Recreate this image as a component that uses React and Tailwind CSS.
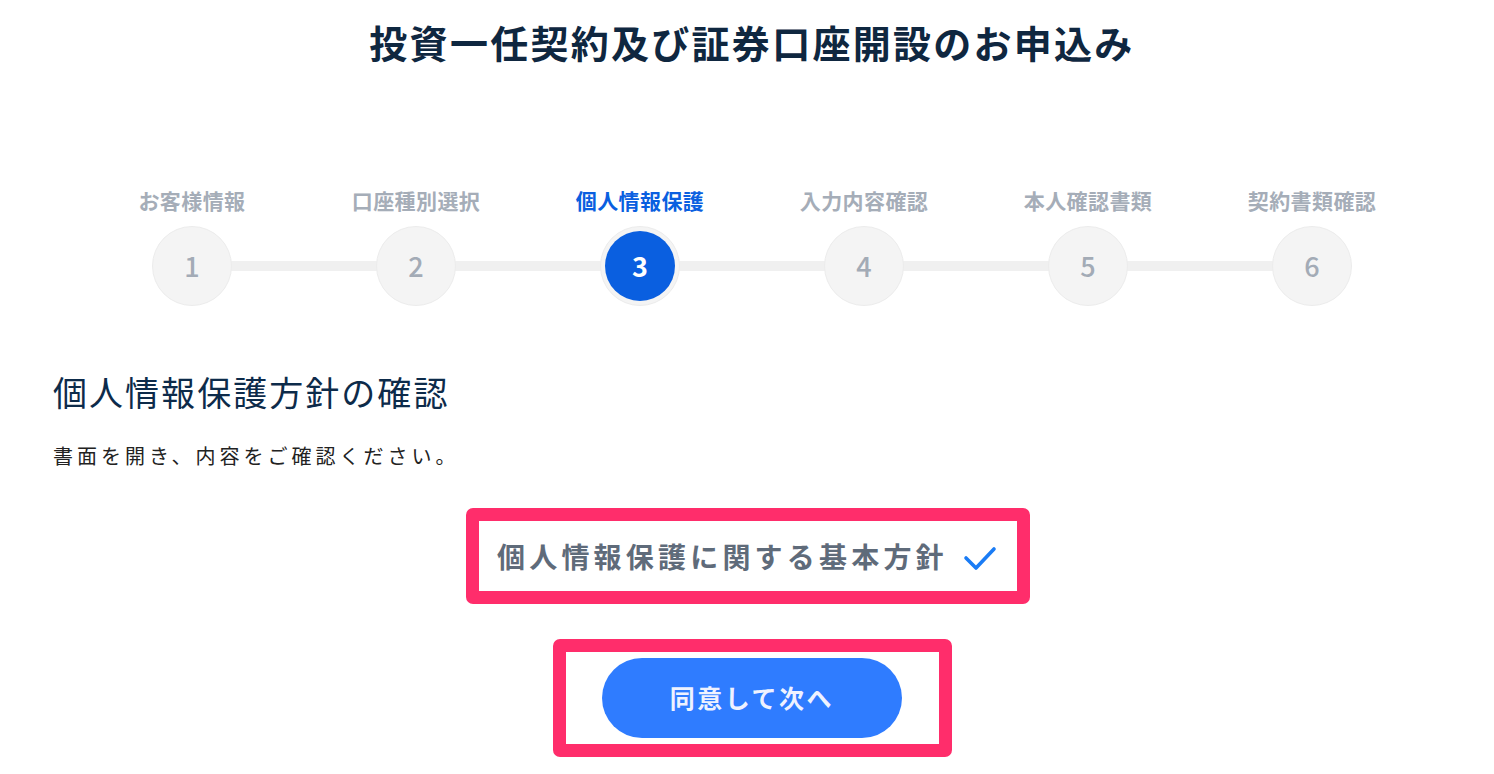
import React from 'react';

const steps = ['お客様情報', '口座種別選択', '個人情報保護', '入力内容確認', '本人確認書類', '契約書類確認'];
const current = 3;

function Stepper() {
  return (
    <div className="mx-auto mt-[116px] grid w-[1344px] grid-cols-6">
      {steps.map((label, i) => {
        const n = i + 1;
        const active = n === current;
        return (
          <div key={label} className="relative flex flex-col items-center">
            <div className={`text-[21px] font-bold leading-[28px] tracking-[0.02em] ${active ? 'text-[#0a5fe0]' : 'text-[#a5adb8]'}`}>
              {label}
            </div>
            {/* connector to the next step */}
            {n < steps.length && (
              <div className="absolute left-1/2 top-[75px] h-[10px] w-full bg-[#f0f0f0]" />
            )}
            <div className="relative z-10 mt-[12px] flex h-[80px] w-[80px] items-center justify-center rounded-full border border-[#ececec] bg-[#f4f4f4]">
              {active ? (
                <div className="flex h-[70px] w-[70px] items-center justify-center rounded-full bg-[#0a5fe0] text-[27px] font-bold text-white">
                  {n}
                </div>
              ) : (
                <span className="text-[27px] font-medium text-[#a3abb6]">{n}</span>
              )}
            </div>
          </div>
        );
      })}
    </div>
  );
}

export default function App() {
  return (
    <div
      className="h-[774px] overflow-hidden bg-white pl-[10px]"
      style={{ fontFamily: '"Noto Sans CJK JP", "Noto Sans", sans-serif' }}
    >
      <h1 className="pt-[14px] text-center text-[38px] font-bold leading-[56px] tracking-[0.06em] text-[#0f2740]">
        投資一任契約及び証券口座開設のお申込み
      </h1>

      <Stepper />

      <div className="px-[43px]">
        <h2 className="mt-[62px] text-[34px] font-normal leading-[48px] tracking-[0.06em] text-[#0d2b4a]">
          個人情報保護方針の確認
        </h2>
        <p className="mt-[25px] text-[20px] leading-[30px] tracking-[0.2em] text-[#222]">
          書面を開き、内容をご確認ください。
        </p>
      </div>

      <div className="mt-[37px] flex flex-col items-center">
        <div className="ml-[-8px] flex h-[96px] w-[564px] items-center rounded-[7px] border-[13px] border-[#ff2d6b] pl-[18px]">
          <span className="text-[28px] font-bold tracking-[0.15em] text-[#5f6b7a]">個人情報保護に関する基本方針</span>
          <svg width="34" height="28" viewBox="0 0 34 28" className="ml-[15px] mt-[6px]">
            <polyline points="3,13 13,23 31,4" fill="none" stroke="#1a7cf5" strokeWidth="3.6" strokeLinecap="round" strokeLinejoin="round" />
          </svg>
        </div>

        <div className="mt-[35px] flex h-[118px] w-[399px] items-center justify-center rounded-[7px] border-[13px] border-[#ff2d6b]">
          <button className="h-[80px] w-[300px] rounded-full bg-[#2f7cff] text-[25px] font-bold tracking-[0.1em] text-[#eef2ff]">
            同意して次へ
          </button>
        </div>
      </div>
    </div>
  );
}
